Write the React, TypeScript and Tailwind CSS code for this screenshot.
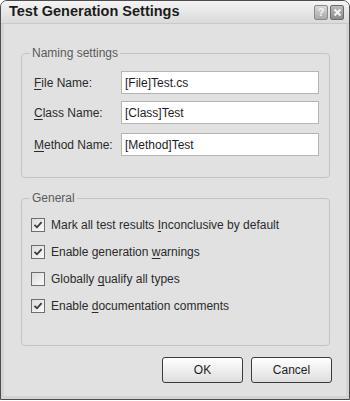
import React from 'react';

const font = { fontFamily: '"Liberation Sans", Arial, sans-serif' };

function U({ children }: { children: React.ReactNode }) {
  return <span className="underline underline-offset-2 decoration-1">{children}</span>;
}

function Field({ label, value, top }: { label: React.ReactNode; value: string; top: string }) {
  return (
    <div className={`flex items-center ${top}`}>
      <div className="w-[99px] pl-[12px] whitespace-nowrap text-[12px] text-[#2b2b2b]">{label}</div>
      <div className="w-[198px] h-[23px] bg-white border border-[#b5b5b5] flex items-center pl-[3px] text-[12px] text-[#1e1e1e]">
        {value}
      </div>
    </div>
  );
}

function Check({ checked, children }: { checked: boolean; children: React.ReactNode }) {
  return (
    <div className="flex items-center h-[14px]">
      <div className="w-[14px] h-[14px] border border-[#6e6e6e] bg-gradient-to-br from-[#dcdcdc] to-[#fafafa] flex items-center justify-center">
        {checked && (
          <svg width="10" height="10" viewBox="0 0 10 10">
            <path d="M1.5 4.8 L4 7.3 L8.6 2.2" fill="none" stroke="#3a3a3a" strokeWidth="1.8" />
          </svg>
        )}
      </div>
      <span className="ml-[6px] whitespace-nowrap text-[12px] text-[#2b2b2b]">{children}</span>
    </div>
  );
}

export default function App() {
  return (
    <div style={font} className="w-[350px] h-[401px] bg-white">
      <div className="w-[350px] h-[400px] border border-[#4d4d4d] rounded-t-[7px] bg-[#e1e1e1] flex flex-col overflow-hidden">
        {/* Title bar */}
        <div className="h-[23px] shrink-0 bg-gradient-to-b from-[#f4f4f4] to-[#dadada] border-b border-[#c9c9c9] flex items-center pl-[8px] pr-[5px]">
          <span className="text-[14.5px] font-bold text-[#1c1c1c]">Test Generation Settings</span>
          <div className="ml-auto flex gap-[2px] mt-[1px]">
            <div className="w-[14px] h-[15px] rounded-[2px] border border-[#8a8a8a] bg-gradient-to-b from-[#d8d8d8] to-[#a9a9a9] flex items-center justify-center text-[11px] font-bold text-[#f4f4f4] leading-none">
              ?
            </div>
            <div className="w-[14px] h-[15px] rounded-[2px] border border-[#6b6b6b] bg-gradient-to-b from-[#bdbdbd] to-[#8a8a8a] flex items-center justify-center">
              <svg width="9" height="9" viewBox="0 0 9 9">
                <path d="M1.5 1.5 L7.5 7.5 M7.5 1.5 L1.5 7.5" stroke="#f4f4f4" strokeWidth="2" />
              </svg>
            </div>
          </div>
        </div>

        {/* Body */}
        <div className="flex-1 border-x-[3px] border-b-[3px] border-[#d4d4d4] px-[17px] pt-[20px]">
          <fieldset className="w-[309px] h-[134px] border border-[#c4c4c4] rounded-[4px]">
            <legend className="ml-[8px] px-[2px] text-[12px] text-[#5a5a5a]">Naming settings</legend>
            <div className="pt-[9px] flex flex-col">
              <Field label={<><U>F</U>ile Name:</>} value="[File]Test.cs" top="" />
              <Field label={<><U>C</U>lass Name:</>} value="[Class]Test" top="mt-[7px]" />
              <Field label={<><U>M</U>ethod Name:</>} value="[Method]Test" top="mt-[9px]" />
            </div>
          </fieldset>

          <fieldset className="mt-[11px] w-[309px] h-[157px] border border-[#c4c4c4] rounded-[4px]">
            <legend className="ml-[8px] px-[2px] text-[12px] text-[#5a5a5a]">General</legend>
            <div className="pt-[11px] pl-[9px] flex flex-col gap-[13px]">
              <Check checked>Mark all test results <U>I</U>nconclusive by default</Check>
              <Check checked>Enable generation <U>w</U>arnings</Check>
              <Check checked={false}>Globally <U>q</U>ualify all types</Check>
              <Check checked>Enable <U>d</U>ocumentation comments</Check>
            </div>
          </fieldset>

          <div className="mt-[11px] flex justify-end gap-[8px] mr-[-3px]">
            <button className="w-[81px] h-[26px] rounded-[3px] border border-[#3c3c3c] bg-gradient-to-b from-[#ffffff] to-[#dedede] text-[12px] text-[#1e1e1e]">
              OK
            </button>
            <button className="w-[81px] h-[26px] rounded-[3px] border border-[#3c3c3c] bg-gradient-to-b from-[#ffffff] to-[#dedede] text-[12px] text-[#1e1e1e]">
              Cancel
            </button>
          </div>
        </div>
      </div>
    </div>
  );
}
